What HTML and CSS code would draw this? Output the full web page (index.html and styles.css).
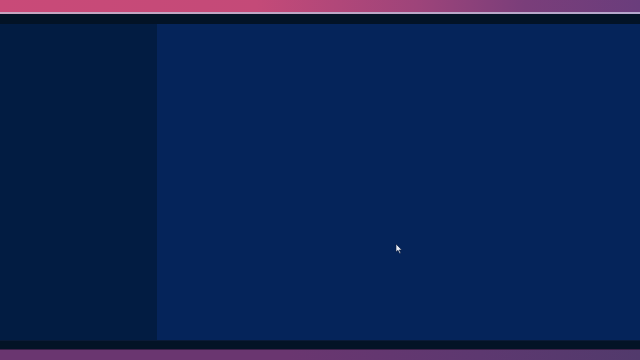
FILE: index.html
```html
<!DOCTYPE html>
<html lang="en">
<head>
  <meta charset="UTF-8" />
  <title>Screen</title>
  <link rel="stylesheet" href="styles.css">
</head>
<body>
<div class="screen">
  <!-- ========== Top bar ========== -->
  <div class="top-bar"></div>
  <div class="top-line"></div>
  <div class="dark-band"></div>

  <!-- ========== Content ========== -->
  <div class="content">
    <aside class="sidebar"></aside>
    <main class="main">
      <svg class="cursor" width="8" height="12" viewBox="0 0 8 12">
        <path d="M1 1 L1 9 L3 7.3 L4.6 10.6 L5.8 10 L4.3 6.9 L6.8 6.9 Z" fill="#e8ecf4" stroke="#0a1a3a" stroke-width=".6"/>
      </svg>
    </main>
  </div>

  <!-- ========== Bottom ========== -->
  <div class="dark-band bottom"></div>
  <div class="bottom-bar"></div>
</div>
</body>
</html>
```

FILE: styles.css
```css
:root{
  --sidebar:#021c42; --main:#05245a; --band:#031326;
}
html,body{margin:0;padding:0;background:var(--band);}
.screen{width:640px;height:360px;display:flex;flex-direction:column;overflow:hidden}

/* ---------- Top ---------- */
.top-bar{
  height:12px;flex:none;
  background:linear-gradient(90deg,#c94a78 0%,#c44a78 40%,#9e447a 65%,#7a3e7a 82%,#6a3d7c 100%);
}
.top-line{height:2px;flex:none;background:linear-gradient(90deg,#c7a6c0,#b5a8cc)}
.dark-band{height:10px;flex:none;background:var(--band)}

/* ---------- Content ---------- */
.content{flex:1;display:flex;min-height:0}
.sidebar{width:157px;flex:none;background:var(--sidebar)}
.main{flex:1;background:var(--main);position:relative}
.cursor{position:absolute;left:238px;top:219px}

/* ---------- Bottom ---------- */
.dark-band.bottom{height:9px;border-top:1px solid #0a1a36;box-sizing:border-box}
.bottom-bar{
  height:10px;flex:none;border-top:1px solid #3a2048;
  background:linear-gradient(90deg,#6a3670 0%,#6a3670 45%,#5d3870 75%,#523a6c 100%);
}
```
